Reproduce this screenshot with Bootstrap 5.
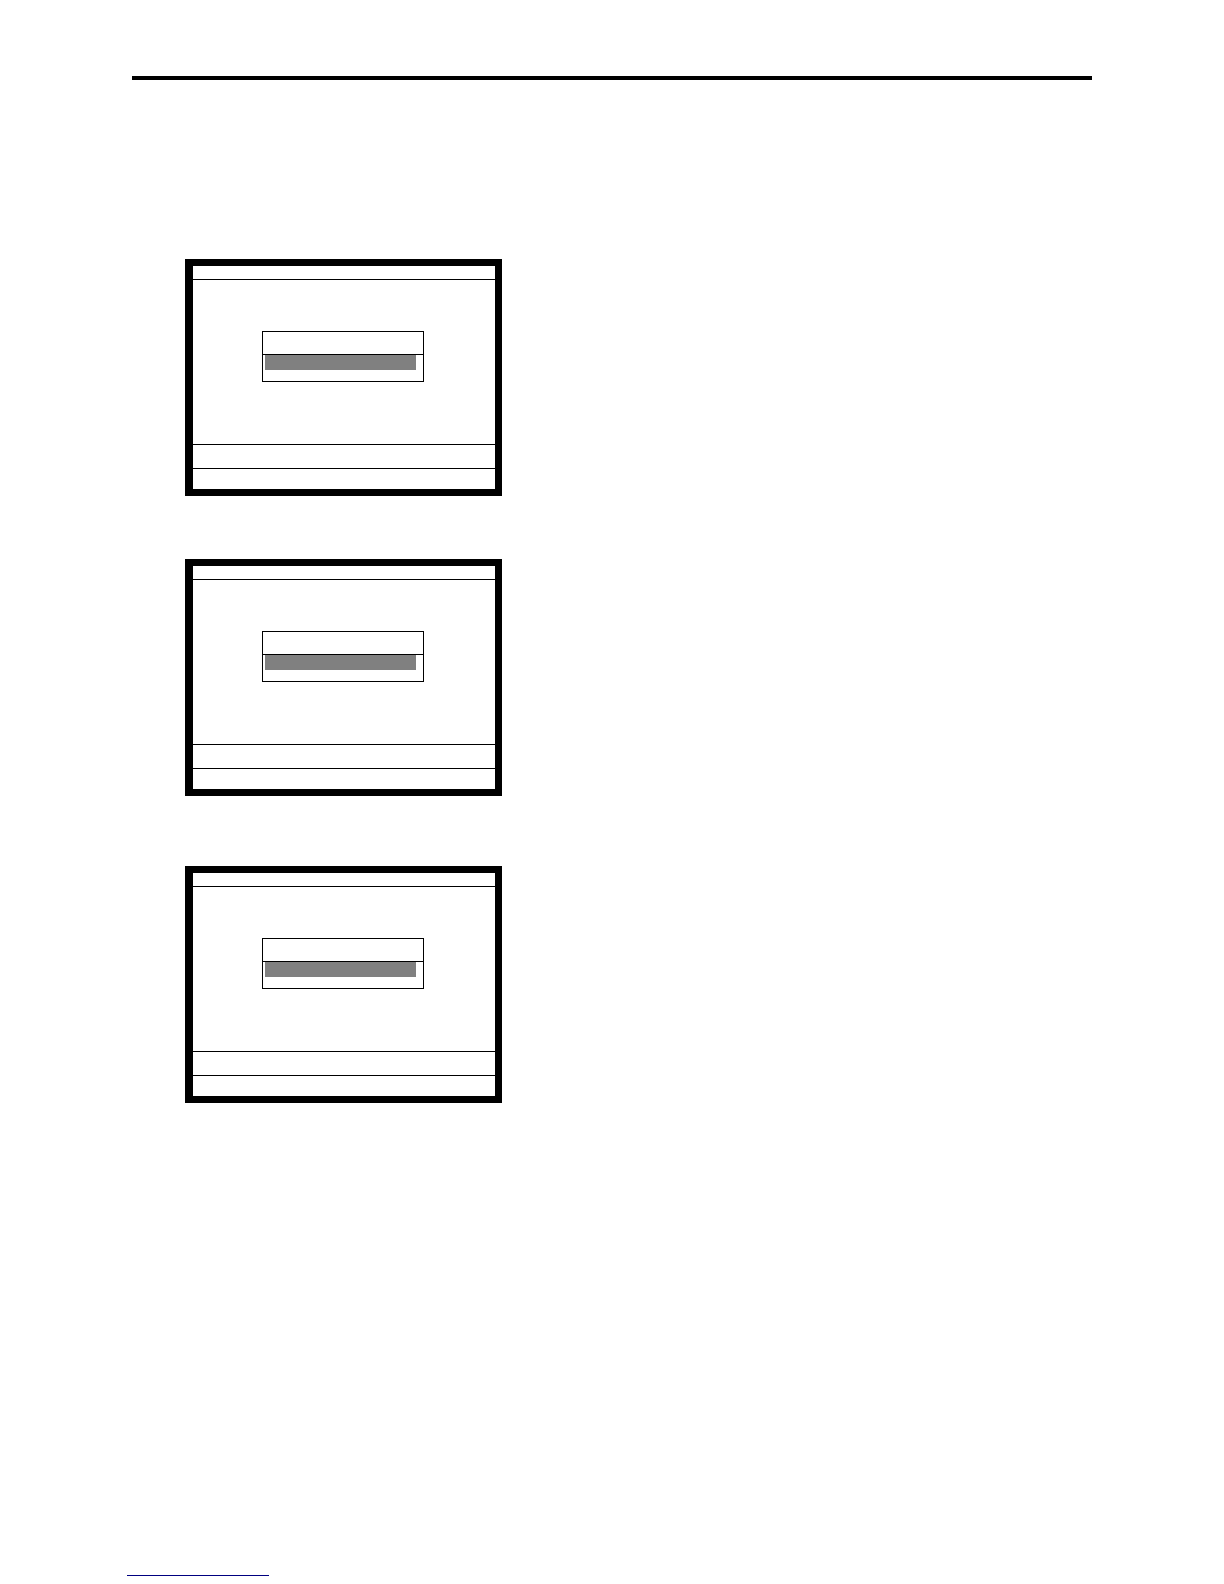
<!DOCTYPE html>
<html lang="en">
<head>
<meta charset="utf-8">
<meta name="viewport" content="width=device-width, initial-scale=1">
<title>Screens</title>
<link href="https://cdn.jsdelivr.net/npm/bootstrap@5.3.0/dist/css/bootstrap.min.css" rel="stylesheet">
<style>
  body { font-family: "Liberation Sans", Arial, sans-serif; background: #fff; }
  .page-head { padding: 76px 132px 0; }
  .page-rule { height: 4px; background: #000; }
  .screens { padding: 179px 132px 0 185px; }
  .screen { max-width: 317px; border: 7px solid #000; border-left-width: 8px; }
  .screen + .screen { margin-top: 63px; }
  .screen + .screen-spaced { margin-top: 70px; }
  .screen-title { height: 14px; border-bottom: 1px solid #000; }
  .screen-main { height: 164px; padding: 51px 71px 0 69px; }
  .screen-message { height: 24px; border-top: 1px solid #000; }
  .screen-keys { height: 21px; border-top: 1px solid #000; }
  .dialog-box { border: 1px solid #000; height: 51px; }
  .dialog-title { height: 23px; border-bottom: 1px solid #000; }
  .dialog-choice { height: 15px; margin: 0 7px 0 2px; background: #808080; }
  .page-foot { padding: 0 127px 8px; }
  .foot-link { width: 142px; height: 20px; border-bottom: 1px solid #000080; }
</style>
<script src="https://cdn.jsdelivr.net/npm/bootstrap@5.3.0/dist/js/bootstrap.bundle.min.js"></script>
</head>
<body class="d-flex flex-column min-vh-100">
  <header class="page-head"><div class="page-rule"></div></header>

  <main class="screens d-flex flex-column">
    <section class="screen w-100">
      <div class="screen-title"></div>
      <div class="screen-main">
        <div class="dialog-box">
          <div class="dialog-title"></div>
          <div class="dialog-choice"></div>
        </div>
      </div>
      <div class="screen-message"></div>
      <div class="screen-keys"></div>
    </section>

    <section class="screen w-100">
      <div class="screen-title"></div>
      <div class="screen-main">
        <div class="dialog-box">
          <div class="dialog-title"></div>
          <div class="dialog-choice"></div>
        </div>
      </div>
      <div class="screen-message"></div>
      <div class="screen-keys"></div>
    </section>

    <section class="screen screen-spaced w-100">
      <div class="screen-title"></div>
      <div class="screen-main">
        <div class="dialog-box">
          <div class="dialog-title"></div>
          <div class="dialog-choice"></div>
        </div>
      </div>
      <div class="screen-message"></div>
      <div class="screen-keys"></div>
    </section>
  </main>

  <footer class="page-foot mt-auto">
    <a class="foot-link d-block" href="#" aria-label="Back to top"></a>
  </footer>
</body>
</html>
